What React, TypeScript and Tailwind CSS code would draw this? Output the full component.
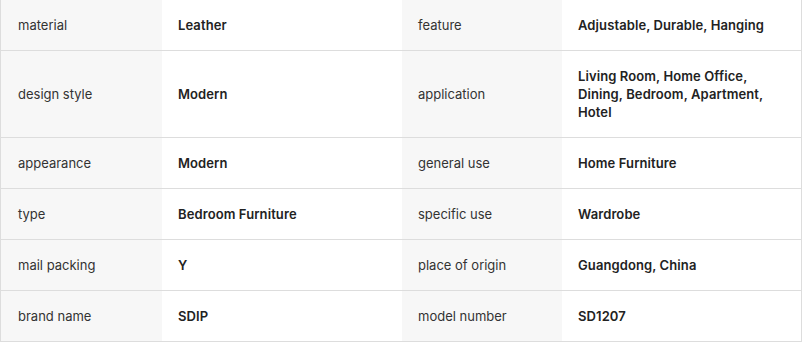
import React from "react";

const rows: [string, string, string, string][] = [
  ["material", "Leather", "feature", "Adjustable, Durable, Hanging"],
  ["design style", "Modern", "application", "Living Room, Home Office, Dining, Bedroom, Apartment, Hotel"],
  ["appearance", "Modern", "general use", "Home Furniture"],
  ["type", "Bedroom Furniture", "specific use", "Wardrobe"],
  ["mail packing", "Y", "place of origin", "Guangdong, China"],
  ["brand name", "SDIP", "model number", "SD1207"],
];

export default function App() {
  return (
    <div className="w-[803px] h-[342px] bg-white" style={{ fontFamily: "Inter, 'Noto Sans', sans-serif" }}>
      <div className="w-[802px] border-x border-[#dddddd]">
        {rows.map((r, i) => (
          <div key={i} className="grid grid-cols-[161px_240px_160px_239px] border-b border-[#dddddd] text-[13px] leading-[18px]">
            <div className="bg-[#f7f7f7] pl-[17px] pr-4 py-4 flex items-center text-[#333333]">{r[0]}</div>
            <div className="px-4 py-4 flex items-center font-semibold tracking-[0.1px] text-[#222222]">{r[1]}</div>
            <div className="bg-[#f7f7f7] px-4 py-4 flex items-center text-[#333333]">{r[2]}</div>
            <div className="px-4 py-4 flex items-center font-semibold tracking-[0.1px] text-[#222222]">{r[3]}</div>
          </div>
        ))}
      </div>
    </div>
  );
}
